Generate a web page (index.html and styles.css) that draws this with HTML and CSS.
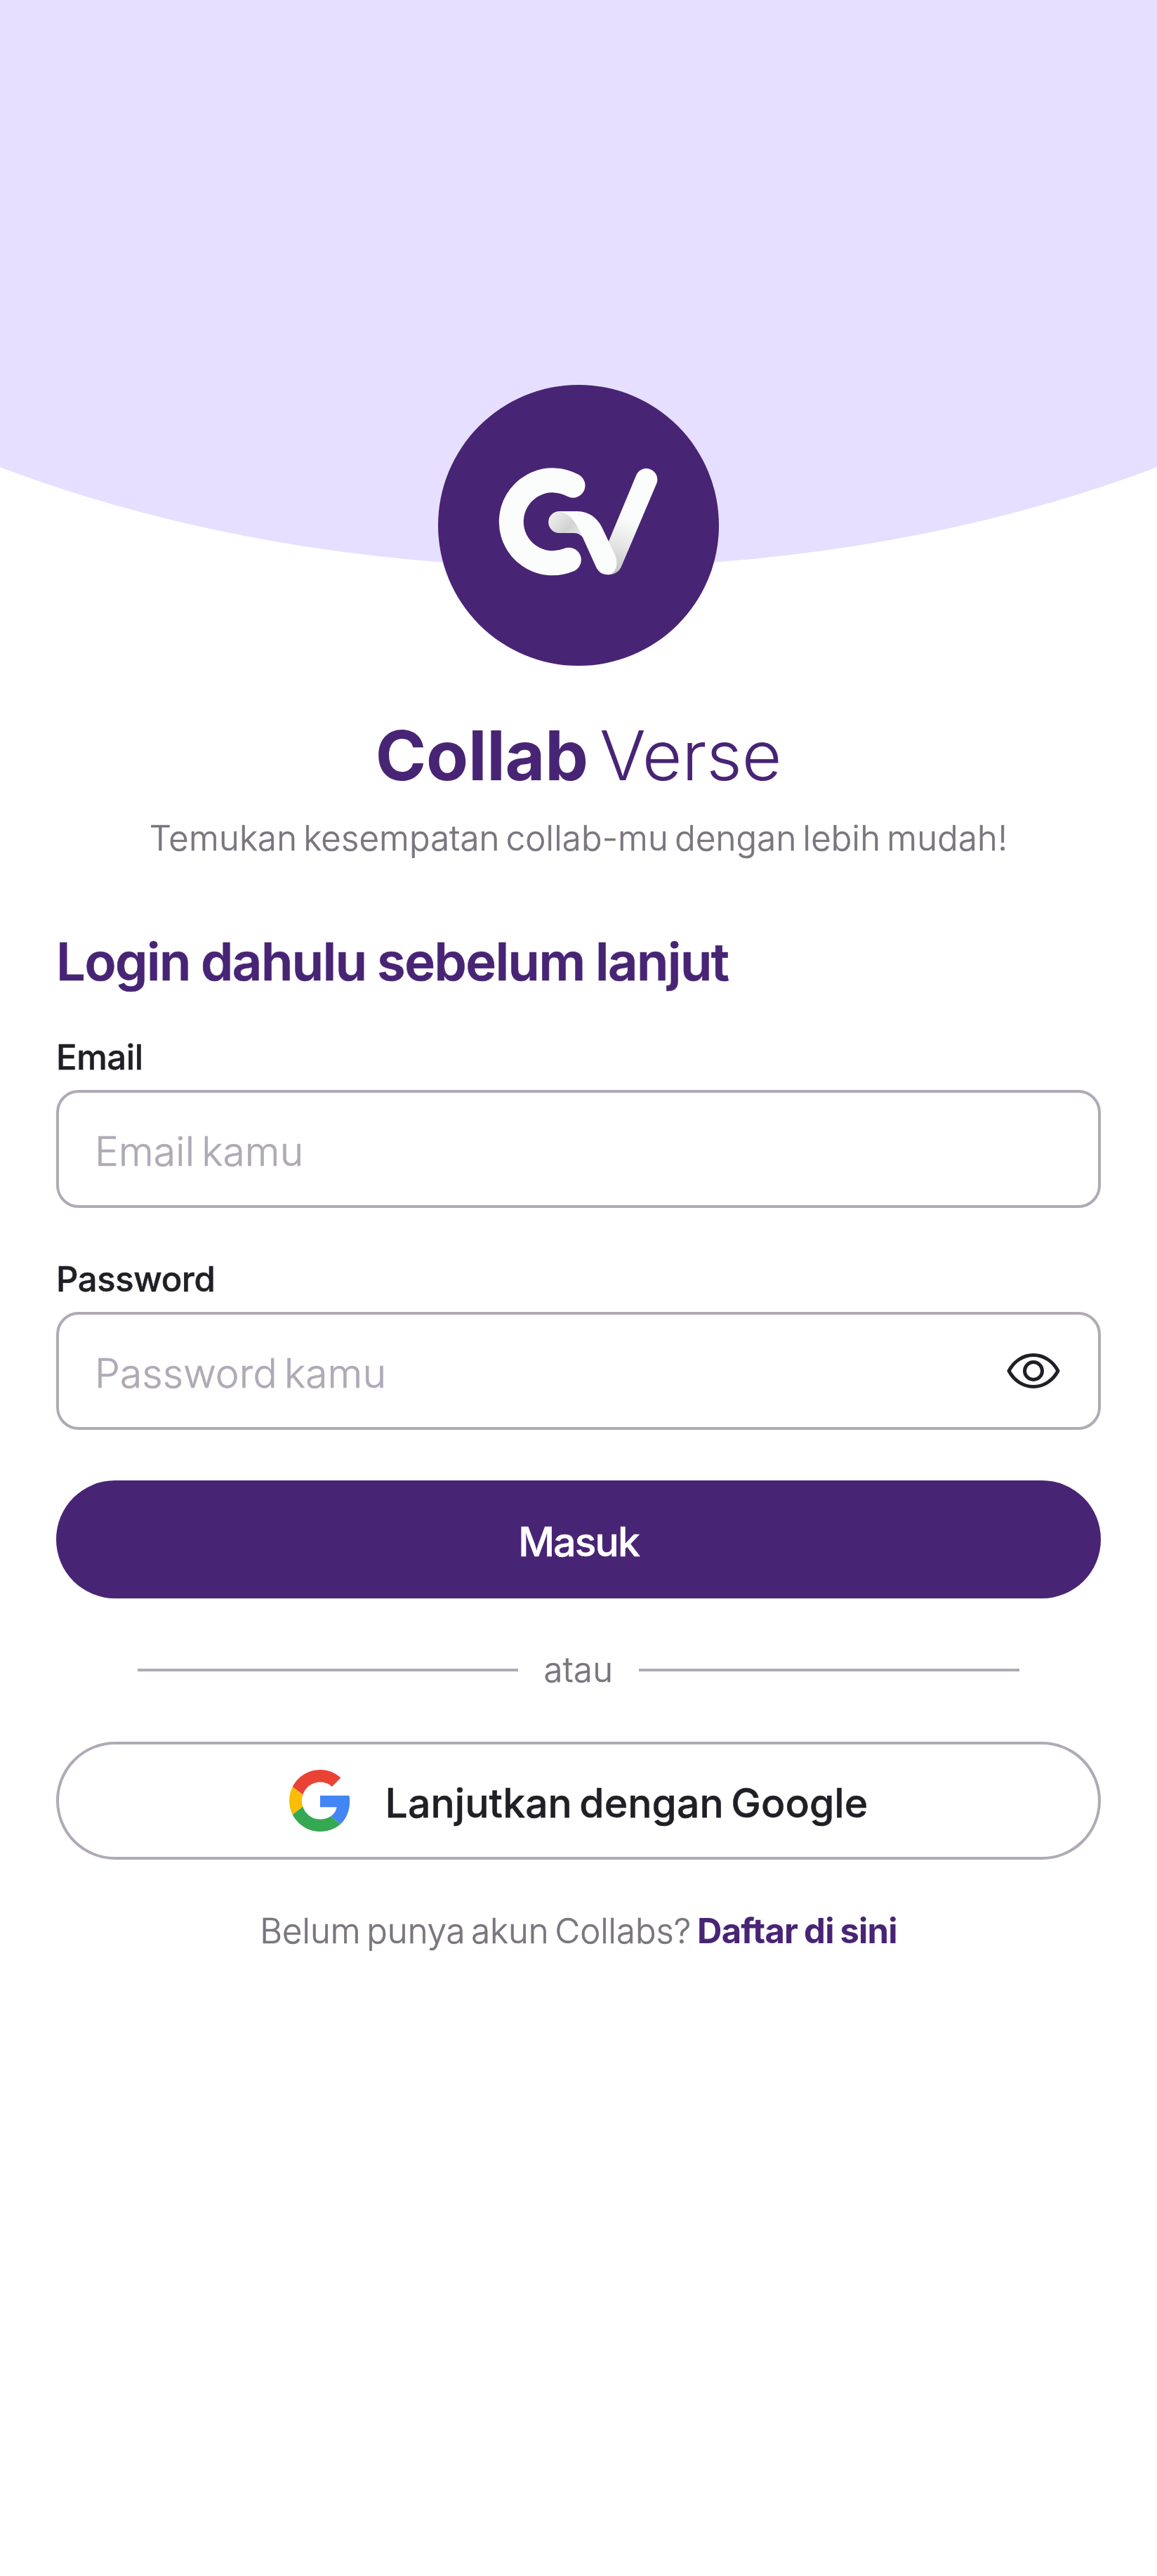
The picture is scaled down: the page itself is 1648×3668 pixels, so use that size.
FILE: index.html
```
<!DOCTYPE html>
<html lang="id">
<head>
  <meta charset="utf-8">
  <title>Collab Verse</title>
  <link rel="stylesheet" href="styles.css">
</head>
<body>
  <main class="screen">
    <header class="hero">
      <svg class="logo" viewBox="72 54 1200 1200" role="img" aria-label="Collab Verse">
        <defs>
          <linearGradient id="fold" gradientUnits="userSpaceOnUse" x1="560" y1="610" x2="660" y2="700">
            <stop offset="0" stop-color="#ededed"/>
            <stop offset=".65" stop-color="#d2d2d2"/>
            <stop offset="1" stop-color="#e4e4e4"/>
          </linearGradient>
          <linearGradient id="stem" gradientUnits="userSpaceOnUse" x1="905" y1="630" x2="820" y2="850">
            <stop offset="0" stop-color="#fbfcfc"/>
            <stop offset=".5" stop-color="#e6e6e6"/>
            <stop offset="1" stop-color="#c4c4c4"/>
          </linearGradient>
        </defs>
        <circle cx="672" cy="654" r="600" fill="#482475"/>
        <path d="M648 484A177 177 0 1 0 631 801.5" fill="none" stroke="#fbfcfc" stroke-width="105" stroke-linecap="round"/>
        <path d="M918 442A46.5 46.5 0 0 1 1006 475L853 835C842 855 824 865 799 865L770 800L802 720Z" fill="url(#stem)"/>
        <path d="M590 594A46.5 46.5 0 0 0 590 687L650 687C668 687 680 692 692 708L700 660L650 594Z" fill="url(#fold)"/>
        <path d="M584 594H668C715 594 752 622 772 662L828 780C848 828 825 865 795 865C775 865 758 855 747 832L694 715C664 640 634 600 584 594Z" fill="#fbfcfc"/>
      </svg>
    </header>

    <section class="brand">
      <h1 class="brand-name"><b>Collab </b>Verse</h1>
      <p class="tagline">Temukan kesempatan collab-mu dengan lebih mudah!</p>
    </section>

    <form class="login">
      <h2 class="login-title">Login dahulu sebelum lanjut</h2>

      <div class="field">
        <label class="field-label" for="email">Email</label>
        <div class="field-box">
          <input class="field-input" id="email" type="email" placeholder="Email kamu">
        </div>
      </div>

      <div class="field">
        <label class="field-label" for="password">Password</label>
        <div class="field-box">
          <input class="field-input" id="password" type="password" placeholder="Password kamu">
          <svg class="eye" viewBox="-48 -48 96 96" fill="none" stroke="#211f26" stroke-width="5" stroke-linejoin="round">
            <path d="M-35 0C-27.5 -14 -14.5 -22.5 0 -22.5S27.5 -14 35 0C27.5 14 14.5 22.5 0 22.5S-27.5 14 -35 0Z"/>
            <circle r="12.5"/>
          </svg>
        </div>
      </div>

      <button class="button button-primary" type="submit"><span>Masuk</span></button>

      <div class="divider"><span>atau</span></div>

      <button class="button button-google" type="button">
        <svg class="google" viewBox="0 0 48 48">
          <path fill="#EA4335" d="M24 9.5c3.54 0 6.71 1.22 9.21 3.6l6.85-6.85C35.9 2.38 30.47 0 24 0 14.62 0 6.51 5.38 2.56 13.22l7.98 6.19C12.43 13.72 17.74 9.5 24 9.5z"/>
          <path fill="#4285F4" d="M46.98 24.55c0-1.57-.15-3.09-.38-4.55H24v9.02h12.94c-.58 2.96-2.26 5.48-4.78 7.18l7.73 6c4.51-4.18 7.09-10.36 7.09-17.65z"/>
          <path fill="#FBBC05" d="M10.53 28.59c-.48-1.45-.76-2.99-.76-4.59s.27-3.14.76-4.59l-7.98-6.19C.92 16.46 0 20.12 0 24c0 3.88.92 7.54 2.56 10.78l7.97-6.19z"/>
          <path fill="#34A853" d="M24 48c6.48 0 11.93-2.13 15.89-5.81l-7.73-6c-2.15 1.45-4.92 2.3-8.16 2.3-6.26 0-11.57-4.22-13.47-9.91l-7.98 6.19C6.51 42.62 14.62 48 24 48z"/>
        </svg>
        <span>Lanjutkan dengan Google</span>
      </button>

      <p class="signup">Belum punya akun Collabs? <a class="signup-link" href="#">Daftar di sini</a></p>
    </form>
  </main>
</body>
</html>
```
FILE: styles.css
```
:root {
  --purple: #482475;
  --lavender: #e6dfff;
  --ink: #211f26;
  --muted: #7a757f;
  --outline: #b0aab6;
}

* {
  box-sizing: border-box;
}

body {
  margin: 0;
  background: #fff;
  color: var(--ink);
  font-family: Inter, "Open Sans", sans-serif;
}

h1,
h2,
p {
  margin: 0;
}

.screen {
  min-height: 3668px;
}

.hero {
  height: 948px;
  padding-top: 548px;
  display: flex;
  justify-content: center;
  background: radial-gradient(ellipse 1520px 893px at 50% -85px, var(--lavender) 99.93%, transparent 100.03%);
}

.logo {
  width: 400px;
  height: 400px;
}

.brand {
  padding-top: 68px;
  text-align: center;
}

.brand-name {
  color: var(--purple);
  font-size: 98px;
  line-height: 120px;
  font-weight: 300;
  letter-spacing: -0.2px;
  word-spacing: -7px;
}

.brand-name b {
  font-weight: 700;
}

.tagline {
  margin-top: 26px;
  color: var(--muted);
  font-size: 49px;
  line-height: 64px;
  font-weight: 300;
  -webkit-text-stroke: 0.6px;
  letter-spacing: 0.22px;
  word-spacing: -5px;
}

.login {
  padding: 95px 80px 0;
}

.login-title {
  margin-bottom: 57px;
  color: var(--purple);
  font-size: 74px;
  line-height: 96px;
  font-weight: 600;
  -webkit-text-stroke: 0.6px;
  letter-spacing: -1.4px;
  word-spacing: -2px;
}

.field {
  display: flex;
  flex-direction: column;
  gap: 14px;
  margin-bottom: 70px;
}

.field-label {
  font-size: 49px;
  line-height: 64px;
  font-weight: 500;
  -webkit-text-stroke: 0.5px;
  letter-spacing: -0.4px;
}

.field-box {
  height: 168px;
  padding: 0 44px 0 51px;
  display: flex;
  align-items: center;
  border: 4px solid var(--outline);
  border-radius: 32px;
}

.field-input {
  flex: 1;
  min-width: 0;
  height: 100%;
  padding: 6px 0 0;
  border: 0;
  outline: 0;
  background: none;
  color: var(--ink);
  font: 300 57px Inter, "Open Sans", sans-serif;
  letter-spacing: 0.1px;
  word-spacing: -6px;
}

.field-input::placeholder {
  color: var(--outline);
  opacity: 1;
  -webkit-text-stroke: 0.6px var(--outline);
}

.eye {
  width: 96px;
  height: 96px;
}

.button {
  width: 100%;
  height: 168px;
  margin: 0;
  padding: 0;
  display: flex;
  align-items: center;
  justify-content: center;
  gap: 49px;
  border: 0;
  border-radius: 84px;
  font: 500 57px Inter, "Open Sans", sans-serif;
  -webkit-text-stroke: 0.5px;
}

.button span {
  padding-top: 6px;
}

.button-primary {
  margin-top: 72px;
  background: var(--purple);
  color: #fff;
  letter-spacing: -1.9px;
}

.button-google {
  border: 4px solid var(--outline);
  background: #fff;
  color: var(--ink);
  letter-spacing: 0.1px;
  word-spacing: -5px;
}

.google {
  width: 88px;
  height: 88px;
}

.divider {
  margin: 70px 116px;
  display: flex;
  align-items: center;
  gap: 36px;
  color: var(--muted);
  font-size: 49px;
  line-height: 64px;
  font-weight: 300;
  -webkit-text-stroke: 0.6px;
  letter-spacing: 0.4px;
}

.divider::before,
.divider::after {
  content: "";
  flex: 1;
  height: 4px;
  background: var(--outline);
}

.signup {
  margin-top: 70px;
  color: var(--muted);
  font-size: 49px;
  line-height: 64px;
  font-weight: 300;
  -webkit-text-stroke: 0.6px;
  letter-spacing: 0;
  word-spacing: -5px;
  text-align: center;
}

.signup-link {
  color: var(--purple);
  font-weight: 700;
  -webkit-text-stroke: 0;
  letter-spacing: -0.8px;
  word-spacing: -2px;
  text-decoration: none;
}
```
